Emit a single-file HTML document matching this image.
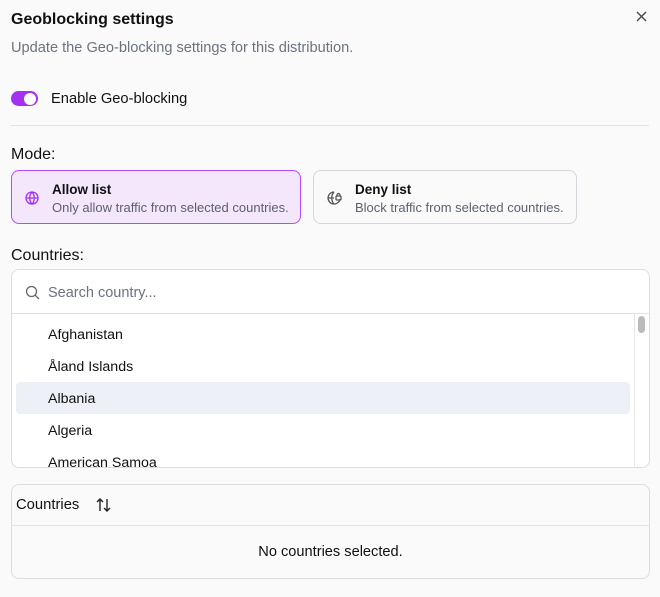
<!DOCTYPE html><html><head><style>
*{box-sizing:border-box;margin:0;padding:0}
body{width:660px;height:597px;background:#fafafa;font-family:"Liberation Sans",sans-serif;color:#111;position:relative;overflow:hidden}
.a{position:absolute}
</style></head><body>
<div class="a" style="left:11px;top:11px;font-size:16px;font-weight:bold">Geoblocking settings</div>
<svg class="a" style="left:636px;top:11px" width="11" height="11" viewBox="0 0 11 11" stroke="#444" stroke-width="1.3"><path d="M1 1l9 9M10 1l-9 9"/></svg>
<div class="a" style="left:11px;top:40px;font-size:14.6px;color:#6b7280">Update the Geo-blocking settings for this distribution.</div>
<div class="a" style="left:11px;top:91px;width:27px;height:15px;border-radius:8px;background:#a232f0"><div class="a" style="left:13px;top:1.5px;width:12px;height:12px;border-radius:6px;background:#fff"></div></div>
<div class="a" style="left:51px;top:91px;font-size:14.7px">Enable Geo-blocking</div>
<div class="a" style="left:11px;top:125px;width:638px;height:1px;background:#e2e2e6"></div>
<div class="a" style="left:11px;top:146px;font-size:16px">Mode:</div>
<div class="a" style="left:11px;top:170px;width:290px;height:54px;border:1px solid #b84af5;border-radius:8px;background:#f4e6fb"></div>
<svg class="a" style="left:24px;top:190px" width="16" height="16" viewBox="0 0 16 16" fill="none" stroke="#a232f0" stroke-width="1.3"><circle cx="8" cy="8" r="6"/><path d="M2 8h12M8 2c-3 3-3 9 0 12M8 2c3 3 3 9 0 12"/></svg>
<div class="a" style="left:52px;top:182px;font-size:13.5px;font-weight:bold">Allow list</div>
<div class="a" style="left:52px;top:200px;font-size:13px;color:#5b6170">Only allow traffic from selected countries.</div>
<div class="a" style="left:313px;top:170px;width:264px;height:54px;border:1px solid #d6d6dc;border-radius:8px;background:#fafafa"></div>
<svg class="a" style="left:326px;top:190px" width="16" height="16" viewBox="0 0 16 16" fill="none" stroke="#555" stroke-width="1.3"><path d="M14 9a6 6 0 1 1-6-7M2 8h6M8 2c-3 3-3 9 0 12"/><rect x="10" y="6" width="5" height="4" rx="1"/><path d="M11 6V5a1.5 1.5 0 0 1 3 0v1"/></svg>
<div class="a" style="left:355px;top:182px;font-size:13.5px;font-weight:bold">Deny list</div>
<div class="a" style="left:355px;top:200px;font-size:13px;color:#5b6170">Block traffic from selected countries.</div>
<div class="a" style="left:11px;top:247px;font-size:16px">Countries:</div>
<div class="a" style="left:11px;top:269px;width:639px;height:199px;border:1px solid #dcdce2;border-radius:8px;background:#fff;overflow:hidden">
<svg class="a" style="left:13px;top:15px" width="15" height="15" viewBox="0 0 15 15" fill="none" stroke="#666" stroke-width="1.3"><circle cx="6.5" cy="6.5" r="5"/><path d="M10.3 10.3L14 14"/></svg>
<div class="a" style="left:36px;top:15px;font-size:14.5px;color:#6b7280">Search country...</div>
<div class="a" style="left:0;top:43px;width:639px;height:1px;background:#e2e2e6"></div>
<div class="a" style="left:4px;top:112px;width:614px;height:32px;background:#eef0f7;border-radius:4px"></div>
<div class="a" style="left:36px;top:57px;font-size:14.2px;line-height:16px">Afghanistan</div>
<div class="a" style="left:36px;top:89px;font-size:14.2px;line-height:16px">Åland Islands</div>
<div class="a" style="left:36px;top:121px;font-size:14.2px;line-height:16px">Albania</div>
<div class="a" style="left:36px;top:153px;font-size:14.2px;line-height:16px">Algeria</div>
<div class="a" style="left:36px;top:185px;font-size:14.2px;line-height:16px">American Samoa</div>
<div class="a" style="left:622px;top:44px;width:1px;height:155px;background:#e6e6e6"></div>
<div class="a" style="left:626px;top:46px;width:7px;height:17px;border-radius:4px;background:#bbb"></div>
</div>
<div class="a" style="left:11px;top:484px;width:639px;height:95px;border:1px solid #dcdce2;border-radius:8px"></div>
<div class="a" style="left:11px;top:525px;width:639px;height:1px;background:#e2e2e6"></div>
<div class="a" style="left:16px;top:497px;font-size:14.8px">Countries</div>
<svg class="a" style="left:96px;top:498px" width="15" height="14" viewBox="0 0 15 14" fill="none" stroke="#222" stroke-width="1.4"><path d="M4 13V1M1 4l3-3 3 3M11 1v12M8 10l3 3 3-3"/></svg>
<div class="a" style="left:11px;top:544px;width:639px;text-align:center;font-size:14.6px">No countries selected.</div>
</body></html>
